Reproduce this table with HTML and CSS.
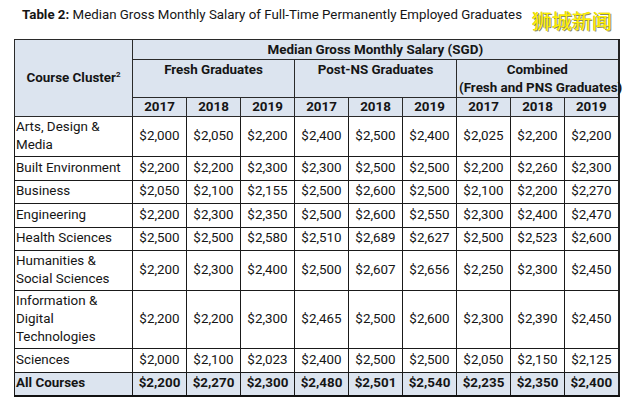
FILE: index.html
```html
<!DOCTYPE html>
<html>
<head>
<meta charset="utf-8">
<link rel="stylesheet" href="styles.css">
</head>
<body>
<div class="page">
  <div class="title"><b>Table 2:</b> Median Gross Monthly Salary of Full-Time Permanently Employed Graduates</div>
  <div class="watermark">狮城新闻</div>
  <table class="salary">
    <colgroup>
      <col class="c-label">
      <col class="c-y"><col class="c-y"><col class="c-y">
      <col class="c-y"><col class="c-y"><col class="c-y">
      <col class="c-y"><col class="c-y"><col class="c-y">
    </colgroup>
    <thead>
      <tr class="h1">
        <th rowspan="3" class="cluster">Course Cluster<sup>2</sup></th>
        <th colspan="9">Median Gross Monthly Salary (SGD)</th>
      </tr>
      <tr class="h2">
        <th colspan="3">Fresh Graduates</th>
        <th colspan="3">Post-NS Graduates</th>
        <th colspan="3">Combined<br>(Fresh and PNS Graduates)</th>
      </tr>
      <tr class="h3">
        <th>2017</th><th>2018</th><th>2019</th>
        <th>2017</th><th>2018</th><th>2019</th>
        <th>2017</th><th>2018</th><th>2019</th>
      </tr>
    </thead>
    <tbody>
      <tr><td class="lbl">Arts, Design &amp;<br>Media</td><td>$2,000</td><td>$2,050</td><td>$2,200</td><td>$2,400</td><td>$2,500</td><td>$2,400</td><td>$2,025</td><td>$2,200</td><td>$2,200</td></tr>
      <tr><td class="lbl">Built Environment</td><td>$2,200</td><td>$2,200</td><td>$2,300</td><td>$2,300</td><td>$2,500</td><td>$2,500</td><td>$2,200</td><td>$2,260</td><td>$2,300</td></tr>
      <tr><td class="lbl">Business</td><td>$2,050</td><td>$2,100</td><td>$2,155</td><td>$2,500</td><td>$2,600</td><td>$2,500</td><td>$2,100</td><td>$2,200</td><td>$2,270</td></tr>
      <tr><td class="lbl">Engineering</td><td>$2,200</td><td>$2,300</td><td>$2,350</td><td>$2,500</td><td>$2,600</td><td>$2,550</td><td>$2,300</td><td>$2,400</td><td>$2,470</td></tr>
      <tr><td class="lbl">Health Sciences</td><td>$2,500</td><td>$2,500</td><td>$2,580</td><td>$2,510</td><td>$2,689</td><td>$2,627</td><td>$2,500</td><td>$2,523</td><td>$2,600</td></tr>
      <tr><td class="lbl">Humanities &amp;<br>Social Sciences</td><td>$2,200</td><td>$2,300</td><td>$2,400</td><td>$2,500</td><td>$2,607</td><td>$2,656</td><td>$2,250</td><td>$2,300</td><td>$2,450</td></tr>
      <tr><td class="lbl">Information &amp;<br>Digital<br>Technologies</td><td>$2,200</td><td>$2,200</td><td>$2,300</td><td>$2,465</td><td>$2,500</td><td>$2,600</td><td>$2,300</td><td>$2,390</td><td>$2,450</td></tr>
      <tr><td class="lbl">Sciences</td><td>$2,000</td><td>$2,100</td><td>$2,023</td><td>$2,400</td><td>$2,500</td><td>$2,500</td><td>$2,050</td><td>$2,150</td><td>$2,125</td></tr>
      <tr class="total"><td class="lbl">All Courses</td><td>$2,200</td><td>$2,270</td><td>$2,300</td><td>$2,480</td><td>$2,501</td><td>$2,540</td><td>$2,235</td><td>$2,350</td><td>$2,400</td></tr>
    </tbody>
  </table>
</div>
</body>
</html>
```

FILE: styles.css
```css
html, body {
  margin: 0;
  padding: 0;
  background: #ffffff;
}
.page {
  position: relative;
  width: 628px;
  height: 403px;
  padding: 6px 0 0 14px;
  box-sizing: border-box;
  font-family: Roboto, "Noto Sans", sans-serif;
  color: #151515;
}
.title {
  font-size: 13.3px;
  line-height: 18px;
  margin-left: 8px;
  margin-bottom: 15px;
}
.title b {
  font-weight: 700;
}
.watermark {
  position: absolute;
  left: 532px;
  top: 8px;
  font-family: "Noto Sans CJK SC", sans-serif;
  font-size: 20px;
  line-height: 26px;
  color: #fff000;
  text-shadow: 1px 1px 0 #8a8a60, -0.5px -0.5px 0 #c8c040;
}
.salary {
  border-collapse: collapse;
  table-layout: fixed;
  width: 604px;
  font-size: 13.4px;
  border: 1px solid #111;
  border-bottom: 2px solid #111;
  border-right: 2px solid #222;
}
.c-label { width: 118px; }
.c-y { width: 54px; }
.salary th, .salary td {
  border: 1px solid #1a1a1a;
  padding: 0 2px;
  line-height: 18px;
  white-space: nowrap;
}
.salary th {
  background: #dce4ef;
  font-weight: 700;
  text-align: center;
}
.salary thead th {
  border-color: #2a2a2a;
}
.h1 { height: 20px; }
.h2 { height: 34px; }
.h2 th { vertical-align: top; padding-top: 1px; }
.h3 { height: 19px; }
.cluster { vertical-align: middle; }
.cluster sup {
  font-size: 8px;
  vertical-align: 5px;
  line-height: 0;
}
.salary tbody tr { height: 23.5px; }
.salary td {
  text-align: center;
  vertical-align: middle;
  padding-top: 1px;
  padding-bottom: 2px;
}
.salary td.lbl {
  text-align: left;
  padding-left: 1px;
}
.total td {
  background: #dce4ef;
  font-weight: 700;
}
```
